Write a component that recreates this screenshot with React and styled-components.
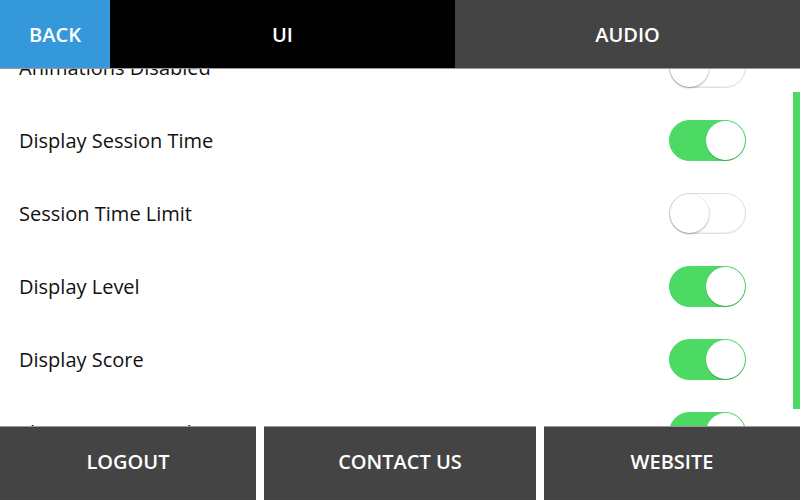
import React from "react";
import styled, { createGlobalStyle } from "styled-components";

const Global = createGlobalStyle`
  html, body { margin: 0; padding: 0; background: #fff; }
  body { font-family: "Open Sans", "Noto Sans", sans-serif; }
  * { box-sizing: border-box; }
`;

const Page = styled.div`
  width: 800px;
  height: 500px;
  display: flex;
  flex-direction: column;
  overflow: hidden;
  background: #fff;
`;

const TopBar = styled.div`
  height: 69px;
  display: flex;
  flex: none;
  border-bottom: 1px solid #9a9a9a;
  position: relative;
  z-index: 2;
`;

const TopTab = styled.div`
  flex: ${(p) => (p.$w ? `0 0 ${p.$w}px` : "1 1 0")};
  background: ${(p) => p.$bg};
  color: #fff;
  display: flex;
  align-items: center;
  justify-content: center;
  font-size: 20px;
  font-weight: 600;
`;

const ScrollArea = styled.div`
  flex: 1 1 auto;
  position: relative;
  overflow: hidden;
`;

const List = styled.div`
  display: flex;
  flex-direction: column;
  margin-top: -38px;
  padding-right: 54px;
`;

const Row = styled.div`
  height: 73px;
  display: flex;
  align-items: center;
  justify-content: space-between;
  padding-left: 19px;
`;

const Label = styled.span`
  font-size: 20px;
  color: #111;
`;

const Toggle = styled.div`
  width: 77px;
  height: 41px;
  border-radius: 21px;
  position: relative;
  background: ${(p) => (p.$on ? "#4cd964" : "#fff")};
  border: 1px solid ${(p) => (p.$on ? "#4cd964" : "#dedede")};
  box-shadow: ${(p) => (p.$on ? "none" : "inset 0 -1px 1px rgba(0,0,0,0.06)")};
`;

const Knob = styled.div`
  position: absolute;
  top: 0;
  ${(p) => (p.$on ? "right: 0;" : "left: 0;")}
  width: 39px;
  height: 39px;
  border-radius: 50%;
  background: #fff;
  box-shadow: ${(p) =>
    p.$on
      ? "0 1px 1px rgba(0,0,0,0.25)"
      : "0 1px 2px rgba(0,0,0,0.3), 0 0 0 1px rgba(0,0,0,0.04)"};
`;

const ScrollThumb = styled.div`
  position: absolute;
  right: 0;
  top: 23px;
  width: 7px;
  height: 317px;
  background: #4cd964;
`;

const BottomBar = styled.div`
  height: 74px;
  flex: none;
  display: flex;
  gap: 8px;
  position: relative;
  z-index: 2;
  background: #fff;
`;

const BottomButton = styled.div`
  flex: ${(p) => `0 0 ${p.$w}px`};
  background: #444;
  border-top: 1px solid #9a9a9a;
  color: #fff;
  display: flex;
  align-items: center;
  justify-content: center;
  padding-bottom: 4px;
  font-size: 20px;
  font-weight: 600;
`;

const rows = [
  ["Animations Disabled", false],
  ["Display Session Time", true],
  ["Session Time Limit", false],
  ["Display Level", true],
  ["Display Score", true],
  ["Show Progress Indicator", true],
];

export default function App() {
  return (
    <Page>
      <Global />
      <TopBar>
        <TopTab $w={110} $bg="#3498db">BACK</TopTab>
        <TopTab $bg="#000">UI</TopTab>
        <TopTab $bg="#444">AUDIO</TopTab>
      </TopBar>
      <ScrollArea>
        <List>
          {rows.map(([label, on]) => (
            <Row key={label}>
              <Label>{label}</Label>
              <Toggle $on={on}>
                <Knob $on={on} />
              </Toggle>
            </Row>
          ))}
        </List>
        <ScrollThumb />
      </ScrollArea>
      <BottomBar>
        <BottomButton $w={256}>LOGOUT</BottomButton>
        <BottomButton $w={272}>CONTACT US</BottomButton>
        <BottomButton $w={256}>WEBSITE</BottomButton>
      </BottomBar>
    </Page>
  );
}
